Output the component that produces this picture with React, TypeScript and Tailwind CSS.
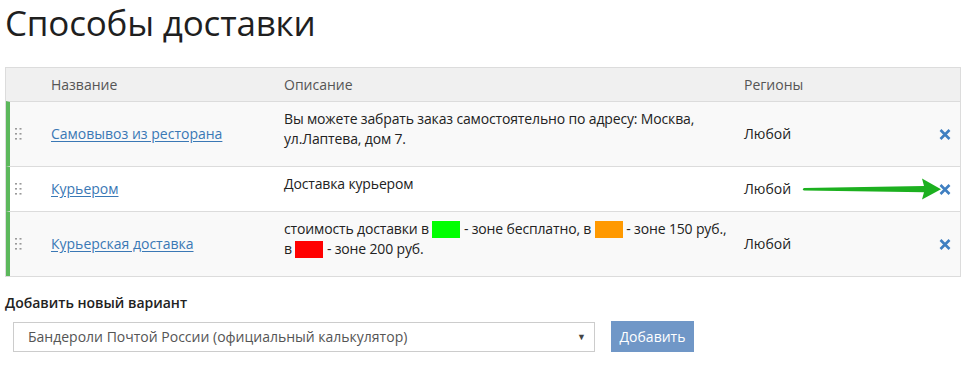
const font = { fontFamily: '"Open Sans", "Noto Sans", sans-serif' };

function DragHandle() {
  return (
    <svg width="7" height="13" viewBox="0 0 7 13" className="text-[#9a9a9a]">
      {[1, 6, 11].map((y) => (
        <g key={y} fill="currentColor">
          <rect x="0" y={y - 1} width="2" height="1.6" />
          <rect x="4.5" y={y - 1} width="2" height="1.6" />
        </g>
      ))}
    </svg>
  );
}

function RemoveIcon() {
  return (
    <svg width="12" height="11" viewBox="0 0 12 11">
      <path d="M1.5 1 L10.5 10 M10.5 1 L1.5 10" stroke="#3f7fc1" strokeWidth="2.6" strokeLinecap="butt" />
    </svg>
  );
}

function Swatch({ color }: { color: string }) {
  return <span className={`inline-block h-[17px] w-[28px] align-[-4px] ${color}`} />;
}

type Row = {
  name: string;
  desc: React.ReactNode;
  bg: string;
};

const rows: Row[] = [
  {
    name: "Самовывоз из ресторана",
    desc: (
      <>
        Вы можете забрать заказ самостоятельно по адресу: Москва,
        <br />
        ул.Лаптева, дом 7.
      </>
    ),
    bg: "bg-[#f9f9f9]",
  },
  { name: "Курьером", desc: "Доставка курьером", bg: "bg-white" },
  {
    name: "Курьерская доставка",
    desc: (
      <>
        стоимость доставки в <Swatch color="bg-[#00ff00]" /> - зоне бесплатно, в{" "}
        <Swatch color="bg-[#ff9900]" /> - зоне 150 руб.,
        <br />в <Swatch color="bg-[#ff0000]" /> - зоне 200 руб.
      </>
    ),
    bg: "bg-[#f9f9f9]",
  },
];

const cols = "grid grid-cols-[33px_233px_460px_194px_1fr]";

export default function App() {
  return (
    <div className="min-h-[380px] bg-white text-[14px] leading-[20px] text-[#222]" style={font}>
      <h1 className="ml-[5px] text-[35px] leading-[46px] font-normal tracking-[-0.2px] text-[#1f1f1f]">
        Способы доставки
      </h1>

      <div className="ml-[5px] mt-[21px] w-[956px] border border-[#dcdcdc]">
        {/* header */}
        <div className={`${cols} h-[33px] items-center border-l-4 border-[#f0f0f0] bg-[#f0f0f0] text-[#555]`}>
          <div />
          <div className="px-2">Название</div>
          <div className="px-2">Описание</div>
          <div className="px-2">Регионы</div>
          <div />
        </div>

        {rows.map((r, i) => (
          <div
            key={r.name}
            className={`relative ${cols} border-t border-t-[#dcdcdc] border-l-4 border-l-[#5cb85c] ${r.bg}`}
          >
            <div className="flex items-center pl-[5px]">
              <DragHandle />
            </div>
            <div className="flex items-center px-2">
              <a href="#" className="text-[#3a78b5] underline underline-offset-2">
                {r.name}
              </a>
            </div>
            <div className="whitespace-nowrap px-2 pt-[7px] pb-[17px] tracking-[-0.15px]">{r.desc}</div>
            <div className="flex items-center px-2">Любой</div>
            <div className="flex items-center justify-center">
              <RemoveIcon />
            </div>

            {i === 1 && (
              <svg
                width="142"
                height="22"
                viewBox="0 0 142 22"
                className="pointer-events-none absolute left-[790px] top-[11px]"
              >
                <path
                  d="M4 9.9 L124 8 L122 0.5 L141 11.2 L122 21.5 L124 14.2 L4 12.6 Q1.5 11.3 4 9.9 Z"
                  fill="#1cb01f"
                />
              </svg>
            )}
          </div>
        ))}
      </div>

      <div className="px-[5px]">
        <div className="mt-[16px] font-semibold text-[#222]">Добавить новый вариант</div>
        <div className="mt-[8px] flex items-center gap-[16px] pl-[8px]">
          <div className="flex h-[30px] w-[582px] items-center justify-between border border-[#cccccc] bg-white pl-[14px] pr-[8px] text-[#555]">
            <span>Бандероли Почтой России (официальный калькулятор)</span>
            <span className="text-[9px] leading-none text-[#444]">▼</span>
          </div>
          <button className="h-[31px] w-[83px] bg-[#7097c7] text-white">Добавить</button>
        </div>
      </div>
    </div>
  );
}
